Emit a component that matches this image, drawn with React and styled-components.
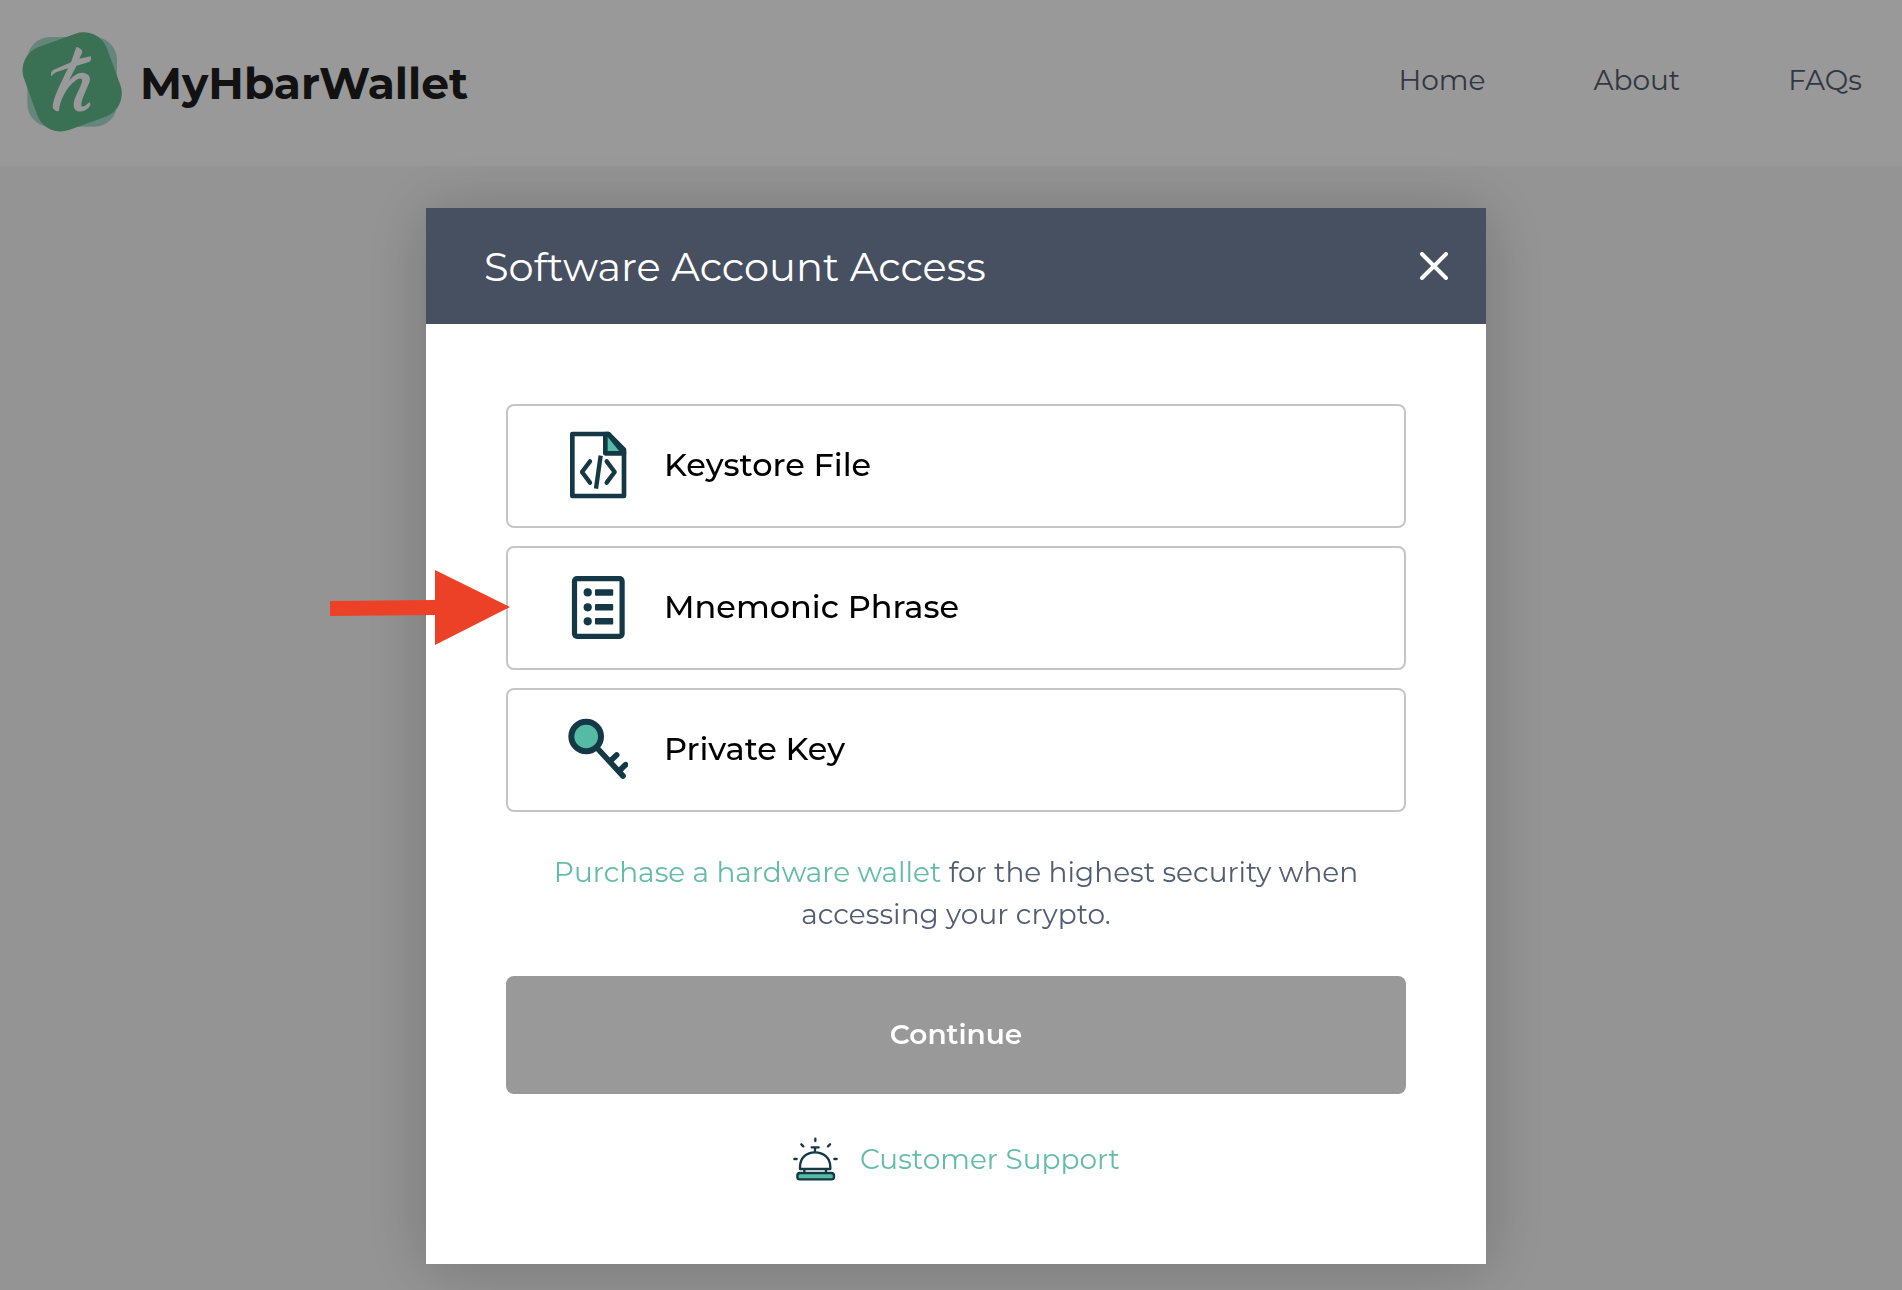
import React, { useState } from "react";
import styled, { createGlobalStyle } from "styled-components";

const DARK = "#143845";
const GREEN = "#56bba4";

const Logo = () => (
  <svg width="106" height="106" viewBox="0 0 318 318" aria-hidden="true">
    <rect x="22" y="21" width="269" height="269" rx="68" fill="#a9e0cb" />
    <rect
      x="24"
      y="23"
      width="265"
      height="265"
      rx="74"
      fill="#62bb8c"
      transform="rotate(-20 156.5 155.5)"
    />
    <path
      fill="#fff"
      d="M169 51C178 52 187 59 187 67L178 86L212 79C214 84 213 90 211 93C208 96 203 97 200 98L170 107C160 124 152 140 146 155C160 135 178 126 192 129C210 133 213 146 207 160C199 180 186 205 184 222C183 234 192 232 208 217C214 222 211 228 204 235C192 246 172 249 164 237C156 222 166 200 176 181C184 163 190 150 184 146C172 142 146 168 134 190C123 210 118 226 117 243C110 245 98 239 98 230C99 205 122 160 144 115L108 127C102 130 96 137 94 139C91 128 95 120 108 116L153 97Z"
    />
  </svg>
);

const FileIcon = () => (
  <svg width="60" height="70" viewBox="204 88 180 210" aria-hidden="true">
    <g fill="none" stroke={DARK} strokeWidth="14" strokeLinejoin="round">
      <path d="M217 103H325L372 150V289H217Z" />
      <path d="M316 103V161H372L325 103Z" fill={GREEN} />
      <path d="M270 185L246 217L270 249M320 185L344 217L320 249" strokeLinecap="round" strokeWidth="13" />
      <path d="M302 168L288 267" strokeWidth="13" />
    </g>
  </svg>
);

const ListIcon = () => (
  <svg width="60" height="70" viewBox="0 0 60 70" aria-hidden="true">
    <rect x="6.5" y="7.7" width="47.6" height="57.6" rx="2.5" fill="none" stroke={DARK} strokeWidth="5.2" />
    <g fill={DARK}>
      <circle cx="19.7" cy="21.4" r="4.1" />
      <circle cx="19.7" cy="36.3" r="4.1" />
      <circle cx="19.7" cy="50.3" r="4.1" />
      <rect x="27" y="18.2" width="18.2" height="6.6" rx="1" />
      <rect x="27" y="33" width="18.2" height="6.6" rx="1" />
      <rect x="27" y="47" width="18.2" height="6.6" rx="1" />
    </g>
  </svg>
);

const KeyIcon = () => (
  <svg width="60" height="70" viewBox="204 101 180 210" aria-hidden="true">
    <g fill="none" stroke={DARK} strokeWidth="17" strokeLinecap="round">
      <path d="M293 208L369 290M350 227L332 244M377 256L359 273" />
      <circle cx="258.5" cy="171.5" r="44.5" fill={GREEN} strokeWidth="18" />
    </g>
  </svg>
);

const BellIcon = () => (
  <svg width="46" height="46" viewBox="36 48 138 138" aria-hidden="true">
    <g fill="none" stroke={DARK} strokeWidth="7" strokeLinecap="round" strokeLinejoin="round">
      <path d="M106 56V63M64 73L70 79M150 73L144 79M43 117H50M163 117H170" />
      <path d="M95 82H116M105 82V94" />
      <path d="M60 147V141C60 113 80 97 105 97S151 113 151 141V147Z" />
      <path d="M73 149V157M138 149V157" />
      <rect x="52" y="159" width="110" height="19" rx="8" fill={GREEN} />
    </g>
  </svg>
);

const CloseIcon = () => (
  <svg width="28" height="28" viewBox="0 0 28 28" aria-hidden="true">
    <path d="M2 2L26 26M26 2L2 26" stroke="#fff" strokeWidth="4" strokeLinecap="round" />
  </svg>
);

const Arrow = () => (
  <PointerArrow width="180" height="76" viewBox="0 0 180 76" aria-hidden="true">
    <path fill="#ec4127" d="M0 31L105 30V0L180 37L105 75V45L0 46Z" />
  </PointerArrow>
);

const OPTIONS = [
  { id: "keystore", label: "Keystore File", icon: <FileIcon /> },
  { id: "mnemonic", label: "Mnemonic Phrase", icon: <ListIcon />, pointed: true },
  { id: "private-key", label: "Private Key", icon: <KeyIcon /> },
];

const App = () => {
  const [selected, setSelected] = useState(null);

  return (
    <>
      <GlobalStyle />
      <Header>
        <Brand href="#home">
          <Logo />
          <BrandName>MyHbarWallet</BrandName>
        </Brand>
        <Nav>
          <a href="#home">Home</a>
          <a href="#about">About</a>
          <a href="#faqs">FAQs</a>
        </Nav>
      </Header>
      <Overlay>
        <Modal role="dialog" aria-labelledby="modal-title">
          <ModalHeader>
            <h2 id="modal-title">Software Account Access</h2>
            <CloseButton type="button" aria-label="Close">
              <CloseIcon />
            </CloseButton>
          </ModalHeader>
          <ModalBody>
            <OptionList>
              {OPTIONS.map(({ id, label, icon, pointed }) => (
                <OptionButton
                  key={id}
                  type="button"
                  $selected={selected === id}
                  onClick={() => setSelected(id)}
                >
                  {icon}
                  {label}
                  {pointed && <Arrow />}
                </OptionButton>
              ))}
            </OptionList>
            <Notice>
              <a href="#hardware">Purchase a hardware wallet</a> for the highest
              security when accessing your crypto.
            </Notice>
            <ContinueButton type="button" disabled={!selected}>
              Continue
            </ContinueButton>
            <SupportLink href="#support">
              <BellIcon />
              Customer Support
            </SupportLink>
          </ModalBody>
        </Modal>
      </Overlay>
    </>
  );
};

const GlobalStyle = createGlobalStyle`
  * {
    box-sizing: border-box;
  }

  body {
    margin: 0;
    min-height: 100vh;
    background: #f7f7f7;
    color: #525d72;
    font-family: "Montserrat", "Inter", sans-serif;
    font-size: 28px;
  }

  a {
    color: inherit;
    text-decoration: none;
  }

  button {
    font-family: inherit;
    cursor: pointer;
  }
`;

const Header = styled.header`
  display: flex;
  align-items: center;
  justify-content: space-between;
  height: 166px;
  padding: 0 40px 0 20px;
  background: #fff;
`;

const Brand = styled.a`
  display: flex;
  align-items: center;
  gap: 14px;
`;

const BrandName = styled.span`
  color: #211e1f;
  font-size: 44px;
  font-weight: 700;
`;

const Nav = styled.nav`
  display: flex;
  gap: 108px;
  padding-bottom: 6px;
`;

const Overlay = styled.div`
  position: fixed;
  inset: 0;
  display: flex;
  align-items: flex-start;
  justify-content: center;
  padding: 208px 0 26px 10px;
  overflow: hidden;
  background: rgba(0, 0, 0, 0.4);
`;

const Modal = styled.section`
  width: 100%;
  max-width: 1060px;
  background: #fff;
  box-shadow: 0 4px 60px rgba(0, 0, 0, 0.22);
`;

const ModalHeader = styled.div`
  display: flex;
  align-items: center;
  justify-content: space-between;
  height: 116px;
  padding: 0 38px 0 58px;
  background: #475060;
  color: #fff;

  & h2 {
    margin: 0;
    font-size: 40px;
    font-weight: 400;
  }
`;

const CloseButton = styled.button`
  display: flex;
  padding: 0;
  border: none;
  background: transparent;
`;

const ModalBody = styled.div`
  display: flex;
  flex-direction: column;
  padding: 80px 80px 82px;
`;

const OptionList = styled.div`
  display: flex;
  flex-direction: column;
  gap: 18px;
`;

const OptionButton = styled.button`
  position: relative;
  display: flex;
  align-items: center;
  gap: 36px;
  height: 124px;
  padding: 0 60px 4px;
  border: 2px solid ${({ $selected }) => ($selected ? GREEN : "#c5c5c5")};
  border-radius: 8px;
  background: #fff;
  color: #000;
  font-size: 32px;
  font-weight: 500;
`;

const PointerArrow = styled.svg`
  position: absolute;
  top: 22px;
  right: 100%;
  margin-right: -2px;
`;

const Notice = styled.p`
  margin: 39px 40px 41px;
  line-height: 42px;
  text-align: center;

  & a {
    color: #64bca8;
  }
`;

const ContinueButton = styled.button`
  height: 118px;
  padding-bottom: 4px;
  border: none;
  border-radius: 8px;
  background: ${GREEN};
  color: #fff;
  font-size: 28px;
  font-weight: 600;

  &:disabled {
    background: #999;
    cursor: default;
  }
`;

const SupportLink = styled.a`
  display: flex;
  align-items: center;
  align-self: center;
  gap: 22px;
  margin-top: 42px;
  color: #64bca8;
`;

export default App;
